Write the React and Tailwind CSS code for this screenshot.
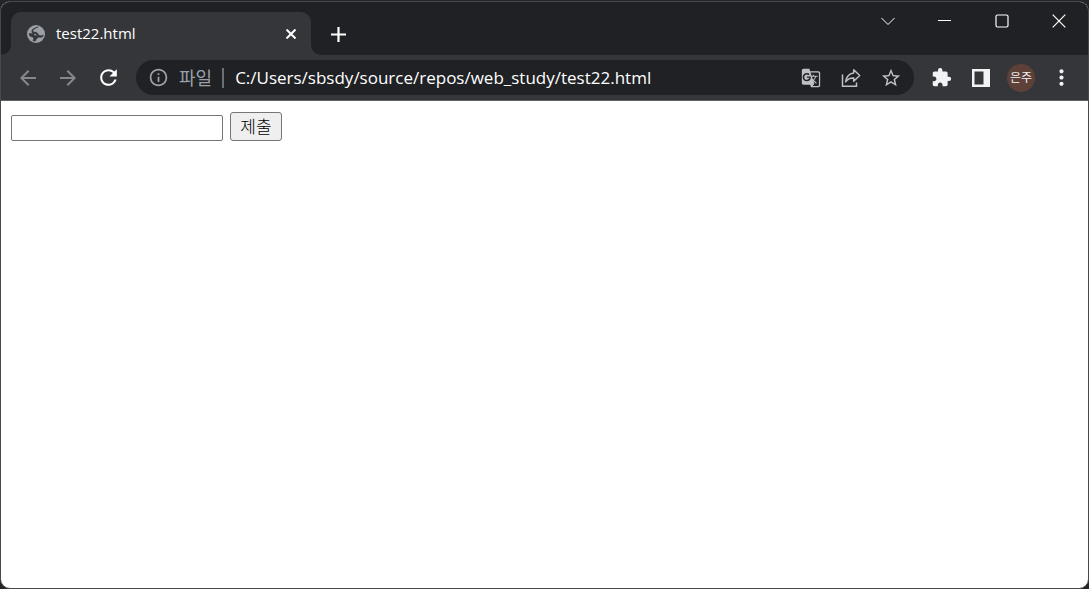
import React from "react";
import {
  MdArrowBack,
  MdArrowForward,
  MdExtension,
  MdGTranslate,
  MdInfoOutline,
  MdMoreVert,
  MdRefresh,
  MdStarBorder,
} from "react-icons/md";

// Square button used in the toolbar and inside the address bar
function IconButton({ label, className = "", children }) {
  return (
    <button
      type="button"
      aria-label={label}
      className={`flex h-9 w-10 shrink-0 items-center justify-center ${className}`}
    >
      {children}
    </button>
  );
}

// Minimize, maximize, close and tab search
function WindowButton({ label, children }) {
  return (
    <button
      type="button"
      aria-label={label}
      className="flex h-[38px] w-[57px] items-center justify-center text-white"
    >
      <svg width="14" height="14" viewBox="0 0 14 14" fill="none" stroke="currentColor">
        {children}
      </svg>
    </button>
  );
}

function GlobeIcon() {
  return (
    <svg width="18" height="18" viewBox="0 0 18 18" fill="none">
      <circle cx="9" cy="9" r="9" fill="#9aa0a6" />
      <path
        d="M11.300 1.900L8.400 3.300 5.800 5.200l.6 1.900 3 .2 1.600 1.500 1.200 1.700 2.300.2 1.700-.8-.2 1.500-2.200 1-2.600-.3-1.200-2L8.500 8.700H6L4.800 6.900l.6-2.500 3-1.600zM1.900 8.600l4.300.1 1.500 1.700 2.500.4 1 1.800-1.900 1.400-1 2.200-2.500-.6 1-1.800-1.100-1.900-2.700-.6z"
        fill="#35363a"
        stroke="#35363a"
        strokeWidth=".5"
      />
    </svg>
  );
}

function ShareIcon() {
  return (
    <svg width="20" height="20" viewBox="0 0 20 20" fill="none" stroke="currentColor" strokeWidth="1.500">
      <path d="M1.500 6.500v11.700h14v-3.700" />
      <path d="M12.700 1.800l6 5.700-6 5.700v-3.200c-3.700-.1-6 1-8 3.700.6-4.600 3.300-8 8-8.700z" strokeLinejoin="round" />
    </svg>
  );
}

function SidePanelIcon() {
  return (
    <svg width="18" height="18" viewBox="0 0 18 18" fill="currentColor" fillRule="evenodd">
      <path d="M0 0h18v18H0zM2.500 2.500v13h9v-13z" />
    </svg>
  );
}

function TabStrip() {
  return (
    <div className="flex h-[53px]">
      <div className="w-2.5 rounded-br-[10px] bg-[#202124]" />
      <div className="bg-[#202124] pt-2.5">
        <div className="flex h-full w-[300px] items-center rounded-t-[10px] bg-[#35363a] pr-2.5 pl-4">
          <GlobeIcon />
          <span className="ml-[11px] flex-1 text-[15px] text-white">test22.html</span>
          <button type="button" aria-label="Close tab" className="flex size-5 items-center justify-center text-white">
            <svg width="10" height="10" viewBox="0 0 10 10" stroke="currentColor" strokeWidth="2">
              <path d="M.5.5l9 9M9.500.5l-9 9" />
            </svg>
          </button>
        </div>
      </div>
      <div className="flex flex-1 justify-between rounded-bl-[10px] bg-[#202124] pr-px">
        <button type="button" aria-label="New tab" className="mt-5 ml-[15px] flex size-6 items-center justify-center text-white">
          <svg width="15" height="15" viewBox="0 0 15 15" stroke="currentColor" strokeWidth="2.200">
            <path d="M7.500 0v15M0 7.500h15" />
          </svg>
        </button>
        <div className="flex">
          <WindowButton label="Search tabs">
            <path d="M.5 4l6.500 6.500L13.500 4" />
          </WindowButton>
          <WindowButton label="Minimize">
            <path d="M0 6.500h13" />
          </WindowButton>
          <WindowButton label="Maximize">
            <rect x="1" y="1" width="12" height="12" rx="1.500" strokeWidth="1.200" />
          </WindowButton>
          <WindowButton label="Close">
            <path d="M.7.7l12.600 12.600M13.300.7L.7 13.300" strokeWidth="1.200" />
          </WindowButton>
        </div>
      </div>
    </div>
  );
}

function Toolbar() {
  return (
    <div className="flex h-[46px] items-center border-b border-[#5f6064] px-[7px]">
      <div className="flex text-[#86888a]">
        <IconButton label="Back">
          <MdArrowBack size={24} />
        </IconButton>
        <IconButton label="Forward">
          <MdArrowForward size={24} />
        </IconButton>
        <IconButton label="Reload" className="text-white">
          <MdRefresh size={25} />
        </IconButton>
      </div>

      {/* Address bar */}
      <div className="mr-[7px] ml-2 flex h-[35px] min-w-0 flex-1 items-center rounded-full bg-[#202124] pr-[3px] pl-3">
        <MdInfoOutline size={21} className="shrink-0 text-[#9aa0a6]" />
        <span className="ml-2.5 shrink-0 text-[18px] leading-6 text-[#9aa0a6]">파일</span>
        <span className="mr-[11px] ml-2.5 h-5 w-0.5 shrink-0 bg-[#6c6f73]" />
        <input
          type="text"
          aria-label="Address"
          defaultValue="C:/Users/sbsdy/source/repos/web_study/test22.html"
          className="min-w-0 flex-1 text-[17px] leading-6 text-white outline-none"
        />
        <div className="flex text-[#bdc1c6]">
          <IconButton label="Translate this page">
            <MdGTranslate size={20} />
          </IconButton>
          <IconButton label="Share this page">
            <ShareIcon />
          </IconButton>
          <IconButton label="Bookmark this tab">
            <MdStarBorder size={22} />
          </IconButton>
        </div>
      </div>

      <div className="flex text-[#f1f3f4]">
        <IconButton label="Extensions">
          <MdExtension size={21} />
        </IconButton>
        <IconButton label="Side panel">
          <SidePanelIcon />
        </IconButton>
        <IconButton label="Profile">
          <span className="flex size-7 items-center justify-center rounded-full bg-[#5d4037] text-[12px]">은주</span>
        </IconButton>
        <IconButton label="Menu">
          <MdMoreVert size={25} />
        </IconButton>
      </div>
    </div>
  );
}

export default function App() {
  return (
    <div className="flex h-screen flex-col bg-[#242528] pt-px font-['Open_Sans','Noto_Sans_CJK_KR',sans-serif]">
      <div className="flex flex-1 flex-col overflow-hidden rounded-[10px] border border-[#47484b] bg-white">
        <header className="bg-[#35363a]">
          <TabStrip />
          <Toolbar />
        </header>

        <main className="flex-1 px-2.5 pt-[11px]">
          <form className="flex items-center gap-[7px]" onSubmit={(e) => e.preventDefault()}>
            <input
              type="text"
              aria-label="입력"
              className="mt-0.5 h-[26px] w-[212px] rounded-[2px] border border-[#767676] px-0.5 text-[17px] text-black"
            />
            <button
              type="submit"
              className="h-[29px] w-[52px] rounded-[3px] border border-[#767676] bg-[#efefef] text-[17px] leading-6 font-light text-black"
            >
              제출
            </button>
          </form>
        </main>
      </div>
    </div>
  );
}
